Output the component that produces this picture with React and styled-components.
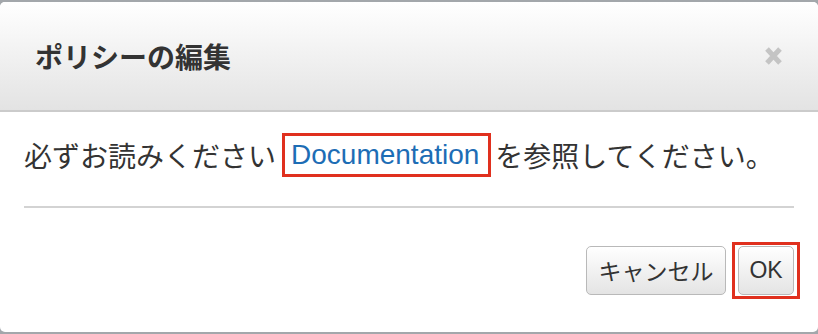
import React from 'react';
import styled, { createGlobalStyle } from 'styled-components';

const GlobalStyle = createGlobalStyle`
  html, body {
    margin: 0;
    padding: 0;
  }
  body {
    width: 818px;
    height: 334px;
    overflow: hidden;
    font-family: "Liberation Sans", "Noto Sans CJK JP", sans-serif;
    color: #333;
  }
`;

const Backdrop = styled.div`
  box-sizing: border-box;
  width: 818px;
  height: 334px;
  padding: 2px 0;
  background: #a3a7ab;
`;

const Modal = styled.div`
  height: 330px;
  background: #fff;
  border-radius: 5px;
  overflow: hidden;
  display: flex;
  flex-direction: column;
`;

const Header = styled.div`
  box-sizing: border-box;
  height: 110px;
  padding: 0 35px;
  display: flex;
  align-items: center;
  justify-content: space-between;
  background: linear-gradient(to bottom, #ffffff, #e3e3e3);
  border-bottom: 2px solid #cbcbcb;
`;

const Title = styled.h3`
  margin: 0;
  font-size: 28px;
  font-weight: 700;
  color: #333;
  font-family: "Noto Sans CJK JP", sans-serif;
`;

const Close = styled.button`
  border: 0;
  padding: 0;
  background: none;
  width: 19px;
  height: 20px;
  display: flex;
  cursor: pointer;
`;

const Body = styled.div`
  padding: 0 24px;
`;

const Message = styled.p`
  box-sizing: border-box;
  margin: 0;
  height: 94px;
  padding-bottom: 8px;
  display: flex;
  align-items: center;
  font-size: 28px;
  color: #333;
  white-space: nowrap;
`;

const Highlight = styled.span`
  display: inline-flex;
  align-items: center;
  box-sizing: border-box;
  height: ${p => p.$height || 'auto'};
  border: 3px solid #e0301e;
  padding: ${p => p.$pad || '0'};
  margin: ${p => p.$margin || '0'};
`;

const DocLink = styled.a`
  color: #1d6db5;
  text-decoration: none;
  font-size: 28px;
`;

const Divider = styled.hr`
  margin: 0;
  border: 0;
  height: 2px;
  background: #d3d3d3;
`;

const Footer = styled.div`
  flex: 1;
  display: flex;
  align-items: center;
  justify-content: flex-end;
  gap: 6px;
  padding: 0 18px 0 0;
`;

const Button = styled.button`
  box-sizing: border-box;
  height: 49px;
  width: ${p => p.$width}px;
  border: 1px solid #b9b9b9;
  border-radius: 5px;
  background: linear-gradient(to bottom, #ffffff, #e4e4e4);
  font-family: "Liberation Sans", "Noto Sans CJK JP", sans-serif;
  font-size: 23px;
  color: #333;
  padding: 0;
  cursor: pointer;
`;

const CloseIcon = () => (
  <svg width="19" height="20" viewBox="0 0 19 20">
    <path d="M3 3 L16 17 M16 3 L3 17" stroke="#c4c4c4" strokeWidth="5" />
  </svg>
);

export default function App() {
  return (
    <>
      <GlobalStyle />
      <Backdrop>
        <Modal>
          <Header>
            <Title>ポリシーの編集</Title>
            <Close aria-label="close"><CloseIcon /></Close>
          </Header>
          <Body>
            <Message>
              必ずお読みください
              <Highlight $height="44px" $pad="0 9px 0 6px" $margin="0 4px 0 6px">
                <DocLink href="#">Documentation</DocLink>
              </Highlight>
              を参照してください。
            </Message>
            <Divider />
          </Body>
          <Footer>
            <Button $width={140}>キャンセル</Button>
            <Highlight as="div" $pad="1px 3px">
              <Button $width={56}>OK</Button>
            </Highlight>
          </Footer>
        </Modal>
      </Backdrop>
    </>
  );
}
